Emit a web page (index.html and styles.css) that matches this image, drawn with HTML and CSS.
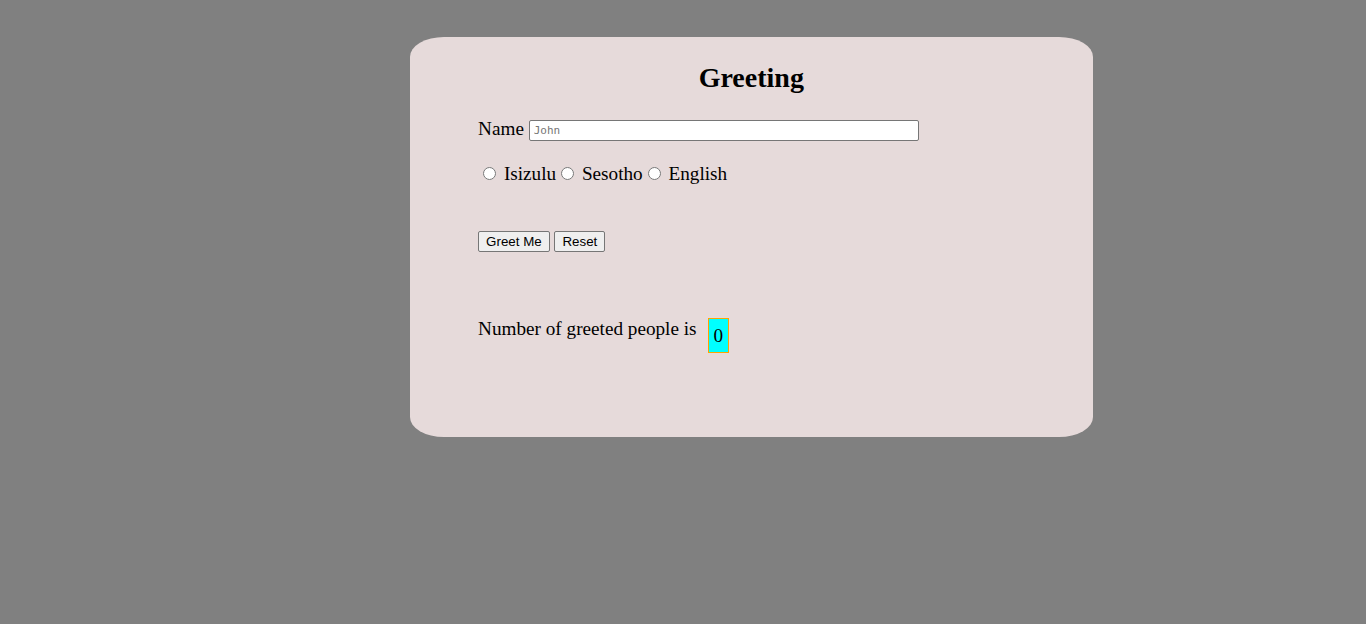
FILE: index.html
```html
<!DOCTYPE html>
<html lang="en">
<head>
<meta charset="utf-8">
<title>Greeting</title>
<link rel="stylesheet" href="styles.css">
</head>
<body>
<div class="card">
  <h1 class="title">Greeting</h1>
  <div class="form">
    <div class="name-row">
      <label class="name-label" for="name">Name</label>
      <input class="name-input" id="name" type="text" placeholder="John">
    </div>
    <div class="lang-row">
      <input class="radio" type="radio" name="lang" id="zu"><label for="zu"> Isizulu</label><input class="radio" type="radio" name="lang" id="st"><label for="st"> Sesotho</label><input class="radio" type="radio" name="lang" id="en"><label for="en"> English</label>
    </div>
    <div class="btn-row">
      <button class="btn" type="button">Greet Me</button>
      <button class="btn" type="button">Reset</button>
    </div>
    <div class="count-row">
      <span class="count-label">Number of greeted people is</span>
      <span class="count">0</span>
    </div>
  </div>
</div>
</body>
</html>
```
FILE: styles.css
```css
html, body {
  margin: 0;
  padding: 0;
}
body {
  background: #808080;
  font-family: "Liberation Serif", "Times New Roman", serif;
  font-size: 19.2px;
  color: #000;
  padding-top: 37px;
}
.card {
  margin-left: 30%;
  width: 50%;
  height: 400px;
  box-sizing: border-box;
  background: #e6dada;
  border-radius: 34px / 20px;
  padding-top: 25px;
}
.title {
  margin: 0;
  text-align: center;
  font-size: 28px;
  line-height: 32px;
  font-weight: bold;
}
.form {
  margin-left: 10%;
}
.name-row {
  margin-top: 24px;
}
.name-input {
  box-sizing: border-box;
  width: 390px;
  height: 21px;
  margin: 0;
  padding: 1px 4px;
  border: 1px solid #767676;
  border-radius: 2px;
  background: #fff;
  font-family: "DejaVu Sans Mono", "Liberation Mono", monospace;
  font-size: 11px;
  vertical-align: 1px;
}
.name-input::placeholder {
  color: #757575;
}
.lang-row {
  margin-top: 22px;
}
.radio {
  width: 13px;
  height: 13px;
  margin: 3px 3px 0 5px;
}
.btn-row {
  margin-top: 46px;
  line-height: 0;
}
.btn {
  box-sizing: border-box;
  height: 21px;
  padding: 1px 7px;
  margin: 0;
  border: 1px solid #767676;
  border-radius: 2px;
  background: #efefef;
  font-family: "Liberation Sans", Arial, sans-serif;
  font-size: 13.33px;
  color: #000;
  vertical-align: top;
}
.count-row {
  display: flex;
  align-items: flex-start;
  gap: 11px;
  margin-top: 66px;
}
.count {
  padding: 6px 5px 5px 5px;
  line-height: 22px;
  border: 1px solid #ffa500;
  background: #00ffff;
}
```
